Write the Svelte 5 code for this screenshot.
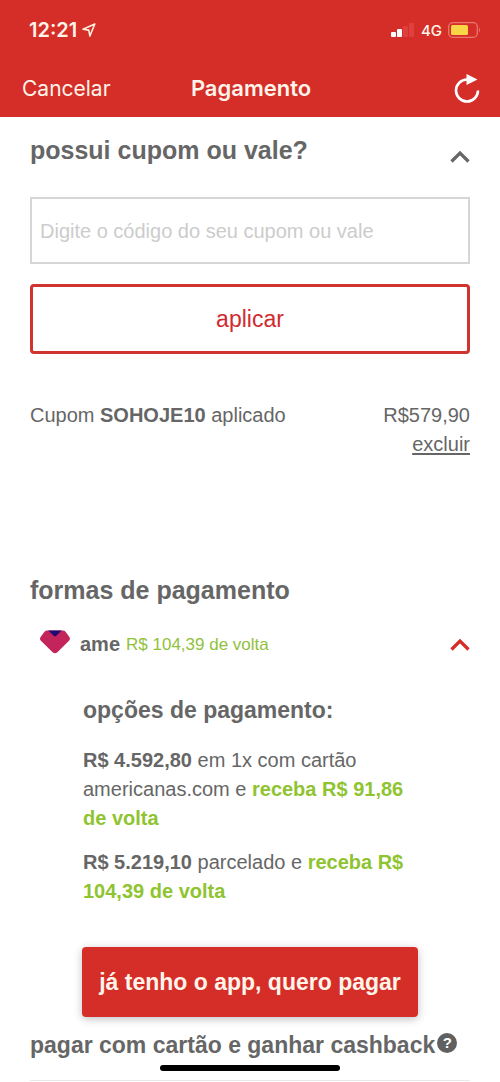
<script lang="ts">
  let couponOpen = $state(true);
  let ameOpen = $state(true);
  let code = $state('');
  let coupon: { code: string; value: string } | null = $state({ code: 'SOHOJE10', value: 'R$579,90' });

  const options = [
    { price: 'R$ 4.592,80', text: 'em 1x com cartão americanas.com e', cashback: 'receba R$ 91,86 de volta' },
    { price: 'R$ 5.219,10', text: 'parcelado e', cashback: 'receba R$ 104,39 de volta' }
  ];

  function applyCoupon(event: SubmitEvent) {
    event.preventDefault();
    if (!code) return;
    coupon = { code: code.toUpperCase(), value: 'R$579,90' };
    code = '';
  }

  function removeCoupon(event: MouseEvent) {
    event.preventDefault();
    coupon = null;
  }
</script>

<div class="page">
  <header>
    <div class="status">
      <span class="time">12:21</span>
      <svg width="14" height="14" viewBox="0 0 14 14" aria-hidden="true">
        <path d="M12.8 1 L1 6.2 L6.8 7.1 L7.9 13 Z" fill="none" stroke="#ffeede" stroke-width="1.6" stroke-linejoin="round" />
      </svg>
      <div class="status-right">
        <svg width="24" height="15" viewBox="0 0 24 15" aria-hidden="true">
          <rect x="0" y="9" width="5" height="5" rx="1" fill="#fff" />
          <rect x="6" y="6" width="5" height="8" rx="1" fill="#fff" />
          <rect x="12" y="3" width="5" height="11" rx="1" fill="#de403d" />
          <rect x="18" y="0" width="5" height="14" rx="1" fill="#de403d" />
        </svg>
        <span class="network">4G</span>
        <svg width="33" height="16" viewBox="0 0 33 16" aria-hidden="true">
          <rect x="0.7" y="0.7" width="28.6" height="14.6" rx="4" fill="none" stroke="#ea7670" stroke-width="1.3" />
          <rect x="3" y="3" width="17" height="10" rx="1.5" fill="#f8d648" />
          <path d="M31 5.5 Q33 8 31 10.5 Z" fill="#ea7670" />
        </svg>
      </div>
    </div>
    <nav>
      <button class="cancel">Cancelar</button>
      <h1>Pagamento</h1>
      <button class="reload" aria-label="Recarregar">
        <svg width="26" height="30" viewBox="0 1 26 30" aria-hidden="true">
          <path d="M13 6.5 A11 11 0 1 0 24 17.5" fill="none" stroke="#fff" stroke-width="2.6" />
          <path d="M12.5 1 L23.5 6.5 L12.5 12 Z" fill="#fff" />
        </svg>
      </button>
    </nav>
  </header>

  <main>
    <section class="coupon">
      <div class="row">
        <h2>possui cupom ou vale?</h2>
        <button class="toggle" aria-label="Cupom ou vale" aria-expanded={couponOpen} onclick={() => (couponOpen = !couponOpen)}>
          <svg class:closed={!couponOpen} width="20" height="13" viewBox="0 0 20 13" aria-hidden="true">
            <path d="M1.5 11.5 L10 3 L18.5 11.5" fill="none" stroke="currentColor" stroke-width="3.2" />
          </svg>
        </button>
      </div>
      {#if couponOpen}
        <form onsubmit={applyCoupon}>
          <input type="text" aria-label="Código do cupom ou vale" placeholder="Digite o código do seu cupom ou vale" bind:value={code} />
          <button class="apply">aplicar</button>
        </form>
      {/if}
      {#if coupon}
        <div class="applied">
          <span>Cupom <strong>{coupon.code}</strong> aplicado</span>
          <div class="discount">
            <span>{coupon.value}</span>
            <a href="#excluir" onclick={removeCoupon}>excluir</a>
          </div>
        </div>
      {/if}
    </section>

    <section>
      <h2>formas de pagamento</h2>
      <div class="row ame">
        <svg class="logo" width="32" height="24" viewBox="0 0 32 24" aria-hidden="true">
          <path d="M8 0.5 H24 Q25.5 0.5 26.5 1.8 L30.4 7 Q31.6 9 30 10.8 L18.4 22.3 Q16 24.4 13.6 22.3 L1.9 10.8 Q0.2 9 1.6 7 L5.5 1.8 Q6.5 0.5 8 0.5 Z" fill="#c3245c" />
          <path d="M9.2 0.5 H22.8 L17 6.1 Q16 7 15 6.1 Z" fill="#200a72" />
        </svg>
        <strong>ame</strong>
        <span class="back">R$ 104,39 de volta</span>
        <button class="toggle red" aria-label="ame" aria-expanded={ameOpen} onclick={() => (ameOpen = !ameOpen)}>
          <svg class:closed={!ameOpen} width="20" height="13" viewBox="0 0 20 13" aria-hidden="true">
            <path d="M1.5 11.5 L10 3 L18.5 11.5" fill="none" stroke="currentColor" stroke-width="3.2" />
          </svg>
        </button>
      </div>
      {#if ameOpen}
        <div class="options">
          <h3>opções de pagamento:</h3>
          {#each options as option}
            <p><strong>{option.price}</strong> {option.text} <strong class="green">{option.cashback}</strong></p>
          {/each}
          <button class="pay">já tenho o app, quero pagar</button>
        </div>
      {/if}
      <div class="card">
        <h3>pagar com cartão e ganhar cashback</h3>
        <button class="help" aria-label="Ajuda">?</button>
      </div>
    </section>
  </main>

  <div class="home-bar"></div>
</div>

<style>
  :global(body) {
    background: #fff;
  }

  .page {
    position: relative;
    font-family: "Liberation Sans", Arial, sans-serif;
    font-size: 20px;
    line-height: 29px;
    color: #666;
  }

  button {
    margin: 0;
    padding: 0;
    border: 0;
    background: none;
    font: inherit;
    color: inherit;
    cursor: pointer;
  }

  svg {
    display: block;
    flex: none;
  }

  h1, h2, h3, p {
    margin: 0;
  }

  header {
    background: #d52d27;
    color: #fff4ea;
    font-family: Inter, sans-serif;
  }

  .status {
    display: flex;
    align-items: center;
    gap: 5px;
    height: 60px;
    padding: 0 19px 0 29px;
  }

  .time {
    font-size: 20px;
    font-weight: 600;
  }

  .status-right {
    display: flex;
    align-items: center;
    gap: 6px;
    margin-left: auto;
  }

  .network {
    font-size: 15px;
    font-weight: 500;
  }

  nav {
    display: grid;
    grid-template-columns: 1fr auto 1fr;
    align-items: center;
    height: 57px;
    padding: 0 20px 0 22px;
  }

  .cancel {
    justify-self: start;
    font-size: 21px;
  }

  h1 {
    font-size: 22px;
    font-weight: 600;
  }

  .reload {
    justify-self: end;
  }

  main {
    padding: 18px 30px 0;
  }

  h2 {
    font-size: 25px;
    line-height: 30px;
  }

  h3 {
    font-size: 23px;
    line-height: 30px;
  }

  .row {
    display: flex;
    align-items: center;
  }

  .toggle {
    margin-left: auto;
    padding-top: 12px;
  }

  .toggle.red {
    padding: 0;
    color: #d52d27;
  }

  .closed {
    transform: rotate(180deg);
  }

  form {
    display: flex;
    flex-direction: column;
    gap: 20px;
    padding-top: 32px;
  }

  input {
    box-sizing: border-box;
    width: 100%;
    height: 67px;
    padding: 2px 8px 0;
    border: 2px solid #d6d6d6;
    border-radius: 0;
    background: #fff;
    font: inherit;
    color: #666;
  }

  input::placeholder {
    color: #ccc;
    opacity: 1;
  }

  .apply {
    height: 70px;
    border: 3px solid #d0342f;
    border-radius: 4px;
    font-size: 23px;
    color: #cf2c30;
  }

  .applied {
    display: flex;
    justify-content: space-between;
    padding-top: 47px;
  }

  .discount {
    display: flex;
    flex-direction: column;
    align-items: flex-end;
  }

  a {
    color: inherit;
    text-underline-offset: 2px;
  }

  .coupon {
    padding-bottom: 116px;
  }

  .ame {
    padding: 25px 0 0 9px;
  }

  .logo {
    align-self: flex-start;
  }

  .ame strong {
    margin-left: 9px;
  }

  .back {
    margin-left: 6px;
    font-size: 17px;
    color: #91c13e;
  }

  .options {
    padding: 36px 52px 0;
  }

  .options h3,
  .options p {
    margin-left: 1px;
  }

  .options p {
    padding-top: 15px;
  }

  .options h3 + p {
    padding-top: 21px;
  }

  .green {
    color: #8fc431;
  }

  .pay {
    width: 100%;
    height: 70px;
    margin-top: 41px;
    border-radius: 4px;
    background: #d52d27;
    box-shadow: 0 2px 8px rgba(0, 0, 0, 0.25);
    font-size: 23px;
    font-weight: bold;
    color: #fff4ea;
  }

  .card {
    display: flex;
    gap: 2px;
    padding: 13px 0 20px;
    border-bottom: 1px solid #e8e8e8;
  }

  .card h3 {
    white-space: nowrap;
  }

  .help {
    width: 20px;
    height: 20px;
    margin-top: 3px;
    border-radius: 50%;
    background: #606060;
    font-size: 15px;
    font-weight: bold;
    line-height: 20px;
    color: #fff;
  }

  .home-bar {
    position: absolute;
    bottom: 10px;
    left: 50%;
    width: 36%;
    height: 6px;
    border-radius: 3px;
    background: #000;
    transform: translateX(-50%);
  }
</style>
